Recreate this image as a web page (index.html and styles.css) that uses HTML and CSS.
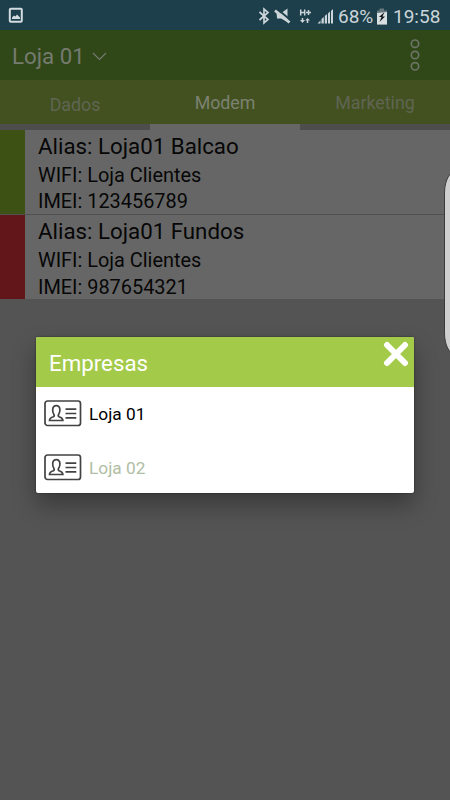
FILE: index.html
```html
<!DOCTYPE html>
<html lang="pt">
<head>
<meta charset="utf-8">
<title>Loja 01</title>
<link rel="stylesheet" href="styles.css">
</head>
<body>
<div class="screen">
  <header class="status">
    <svg class="shot" width="16" height="17" viewBox="0 0 16 17"><rect x="1.8" y="1.8" width="12" height="13" rx="1" fill="none" stroke="#d3dce0" stroke-width="2"/><path d="M4 12V10.500L6 8.500L7.500 9.500L9 7.500L12 10.500V12Z" fill="#d3dce0"/></svg>
    <svg class="icons" width="90" height="20" viewBox="0 0 90 20">
      <path d="M1.500 6L10 13.500L6 17V3L10 6.500L1.500 14" fill="none" stroke="#cbd5d9" stroke-width="1.700"/>
      <path d="M18.500 5.500L22 8L29.500 2.500V16L23 12.500H19Z" fill="#cbd5d9"/><path d="M18 2L33 14.500" stroke="#1d3f4b" stroke-width="2"/><path d="M17 4.500L31.500 16.500" stroke="#cbd5d9" stroke-width="2.800"/>
      <path d="M42.700 3.500V9.500M46.700 3.500V9.500M42.700 6.500H46.700M48 6.500H53M50.500 4V9M44.500 12V15M49.500 13V17" fill="none" stroke="#cbd5d9" stroke-width="1.500"/><path d="M42 14H47L44.500 17ZM47.300 14.500L49.500 12L52 14.500Z" fill="#cbd5d9"/>
      <path d="M59.500 17.500L62.500 14.500V17.500ZM63.500 17.500V13L65.800 11V17.500ZM66.800 17.500V10L69 8V17.500ZM70 17.500V7.500L72 5.500V17.500ZM73 17.500V5L75 3V17.500Z" fill="#cbd5d9"/>
    </svg>
    <span class="percent">68%</span>
    <svg class="battery" width="12" height="17" viewBox="0 0 12 17"><path d="M3.500 0.500H8V2.500H11V16.500H1V2.500H3.500Z" fill="#66777d"/><path d="M1 5L11 4V16.500H1Z" fill="#d8dfe2"/><path d="M8.500 4L3 9H5.500L3.500 14L9 8.500H6.500Z" fill="#15191a"/></svg>
    <span class="clock">19:58</span>
  </header>
  <div class="appbar">
    <span class="store">Loja 01</span>
    <svg class="chevron" width="15" height="10" viewBox="0 0 15 10"><path d="M1 1L7.500 7.500L14 1" fill="none" stroke="#777d71" stroke-width="1.100"/></svg>
    <svg class="more" width="12" height="34" viewBox="0 0 12 34"><g fill="none" stroke="#6c7465" stroke-width="1.700"><circle cx="6" cy="5.700" r="3.700"/><circle cx="6" cy="17" r="3.700"/><circle cx="6" cy="28.300" r="3.700"/></g></svg>
  </div>
  <nav class="tabs"><span class="tab lower">Dados</span><span class="tab active">Modem</span><span class="tab">Marketing</span></nav>
  <main class="list">
    <section class="row"><div class="mark online"></div><div class="info"><h2>Alias: Loja01 Balcao</h2><p>WIFI: Loja Clientes</p><p>IMEI: 123456789</p></div></section>
    <section class="row second"><div class="mark offline"></div><div class="info"><h2>Alias: Loja01 Fundos</h2><p>WIFI: Loja Clientes</p><p>IMEI: 987654321</p></div></section>
  </main>
  <div class="edge"></div>
  <div class="dialog">
    <div class="dialog-head"><span>Empresas</span>
      <svg class="close" width="26" height="26" viewBox="0 0 26 26"><path d="M4 4L22 22M22 4L4 22" stroke="#fff" stroke-width="6" stroke-linecap="round"/></svg>
    </div>
    <div class="company">
      <svg width="38" height="27" viewBox="0 0 38 27"><g fill="none" stroke="#424242" stroke-width="1.700"><rect x="1" y="1" width="35.500" height="24.500" rx="2.500"/><path d="M5.500 20.500Q5.500 17.800 9.500 16.800Q10.800 16 9.800 14.300Q8.500 12.500 8.700 9.500Q9 5.700 12.300 5.700Q15.600 5.700 15.900 9.500Q16 12.500 14.700 14.300Q13.700 16 15 16.800Q18.800 17.800 18.900 20.500Z"/><path d="M21.500 9.200H32.300M21.500 13.500H32.300M21.500 17.800H32.300"/></g></svg>
      <span>Loja 01</span>
    </div>
    <div class="company muted">
      <svg width="38" height="27" viewBox="0 0 38 27"><g fill="none" stroke="#424242" stroke-width="1.700"><rect x="1" y="1" width="35.500" height="24.500" rx="2.500"/><path d="M5.500 20.500Q5.500 17.800 9.500 16.800Q10.800 16 9.800 14.300Q8.500 12.500 8.700 9.500Q9 5.700 12.300 5.700Q15.600 5.700 15.900 9.500Q16 12.500 14.700 14.300Q13.700 16 15 16.800Q18.800 17.800 18.900 20.500Z"/><path d="M21.500 9.200H32.300M21.500 13.500H32.300M21.500 17.800H32.300"/></g></svg>
      <span>Loja 02</span>
    </div>
  </div>
</div>
</body>
</html>
```
FILE: styles.css
```css
* { box-sizing: border-box; }
body { margin: 0; font-family: Roboto, sans-serif; }
h2, p { margin: 0; font-weight: 400; }
svg { display: block; flex: none; }
.screen { position: relative; width: 450px; height: 800px; overflow: hidden; background: #545454; }
.status { height: 30px; display: flex; align-items: center; background: #1d3f4b; color: #cbd5d9; font-size: 19px; }
.shot { margin-left: 8px; }
.icons { margin-left: 234px; margin-top: 1px; }
.icons, .percent, .battery, .clock { white-space: nowrap; }
.percent { width: 36px; margin-left: -10px; margin-top: 3px; }
.battery { margin-left: 2px; margin-top: 2px; }
.clock { margin-left: 5px; margin-top: 3px; }
.appbar { height: 50px; display: flex; align-items: center; padding-left: 12px; background: #304718; color: #757b6f; }
.store { font-size: 22.300px; line-height: 50px; padding-top: 2px; }
.chevron { margin-left: 7px; margin-top: 3px; }
.more { margin-left: auto; margin-right: 29px; }
.tabs { height: 50px; display: grid; grid-template-columns: repeat(3, 1fr); background: #435120; }
.tab { height: 50px; border-bottom: 6px solid #4d4d4d; text-align: center; font-size: 17.800px; line-height: 46px; color: #5f6552; }
.tab.lower { line-height: 50px; }
.tab.active { border-color: #666; color: #7c8271; }
.row { height: 85px; display: flex; background: #666; border-bottom: 1px solid #505050; }
.mark { width: 25px; }
.online { background: #3d5115; }
.offline { background: #631619; }
.info { padding: 2px 0 0 13px; color: #070707; }
.info h2 { font-size: 22.300px; line-height: 28px; }
.info p { font-size: 19.900px; line-height: 27px; }
.info p:nth-of-type(1) { padding-top: 2px; }
.info p:nth-of-type(2) { margin-top: -1px; }
.second .info p:nth-of-type(2) { margin-top: 0; }
.second { height: 84px; border-bottom: 0; }
.edge { position: absolute; left: 444px; top: 172px; width: 20px; height: 182px; border: 1px solid #3b3b3b; border-radius: 14px / 30px; background: #cfcfcf; }
.dialog { position: absolute; left: 36px; top: 337px; width: 378px; height: 156px; border-radius: 2px; overflow: hidden; background: #fff; box-shadow: 0 12px 24px rgba(0,0,0,.32), 0 0 2px rgba(0,0,0,.5); }
.dialog-head { height: 50px; display: flex; justify-content: space-between; padding: 0 5px 0 13px; background: #a4ca4a; color: #fff; font-size: 22.300px; line-height: 52px; }
.close { margin-top: 4px; }
.company { height: 54px; display: flex; align-items: center; gap: 7px; padding: 0 0 2px 8px; font-size: 17.300px; color: #000; }
.company span { padding-top: 1px; }
.muted { color: #b1bea5; }
```
